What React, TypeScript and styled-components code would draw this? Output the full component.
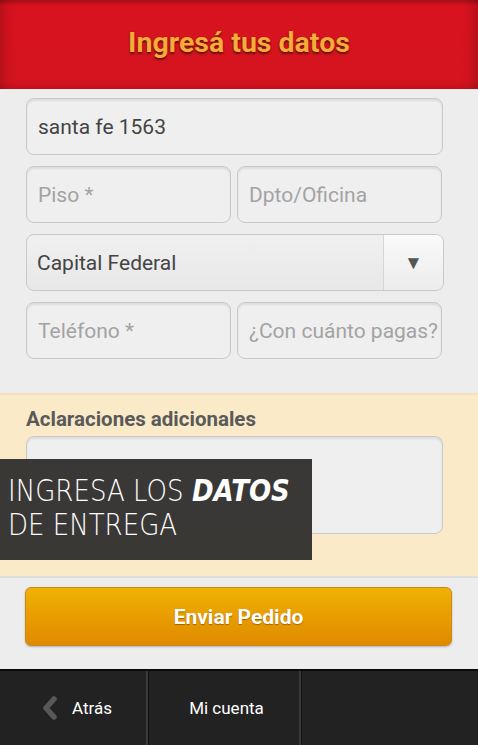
import styled, { createGlobalStyle } from "styled-components"

const GlobalStyle = createGlobalStyle`
  html, body {
    margin: 0;
    padding: 0;
    background: #ededed;
    font-family: Roboto, "Liberation Sans", sans-serif;
  }
  * {
    box-sizing: border-box;
  }
`

const Page = styled.div`
  width: 478px;
  height: 745px;
  display: flex;
  flex-direction: column;
  background: #ededed;
  position: relative;
  overflow: hidden;
`

const Header = styled.header`
  height: 89px;
  display: flex;
  align-items: center;
  justify-content: center;
  background: linear-gradient(#a8101a 0px, #d8131f 6px, #d51420 80px, #c8121c 89px);
  box-shadow: inset 12px 0 14px -10px rgba(0, 0, 0, 0.25),
    inset -12px 0 14px -10px rgba(0, 0, 0, 0.25);
`

const Title = styled.h1`
  margin: 0;
  padding-bottom: 4px;
  font-size: 28.5px;
  font-weight: 700;
  color: #f8aa3a;
  text-shadow: 0 2px 2px #6a1208, 0 0 1px #6a1208;
`

const Form = styled.div`
  padding: 9px 35px 34px 26px;
  display: flex;
  flex-direction: column;
  gap: 11px;
`

const Row = styled.div`
  display: grid;
  grid-template-columns: 205px 205px;
  gap: 6px;
`

const Field = styled.div<{ $filled?: boolean }>`
  height: 57px;
  display: flex;
  align-items: center;
  padding-left: 11px;
  border: 1px solid #c9c9c9;
  border-radius: 8px;
  background: #efefef;
  box-shadow: inset 0 2px 2px rgba(0, 0, 0, 0.08);
  font-size: 21px;
  color: ${(p) => (p.$filled ? "#444" : "#a3a3a3")};
  white-space: nowrap;
  overflow: hidden;
`

const Select = styled.div`
  height: 57px;
  margin-right: -1px;
  display: flex;
  border: 1px solid #c9c9c9;
  border-radius: 8px;
  background: linear-gradient(#f0f0f0, #e8e8e8);
  overflow: hidden;
`

const SelectValue = styled.div`
  flex: 1;
  display: flex;
  align-items: center;
  padding-left: 10px;
  font-size: 21px;
  color: #444;
`

const SelectArrow = styled.div`
  width: 60px;
  display: flex;
  align-items: center;
  justify-content: center;
  border-left: 1px solid #d6d6d6;
  background: linear-gradient(#fafafa, #ececec);
  font-size: 19px;
  color: #555;
`

const Notes = styled.section`
  height: 185px;
  background: #fbeac7;
  border-top: 2px solid #f5e2bd;
  border-bottom: 2px solid #dedede;
  padding: 12px 35px 0 26px;
`

const Label = styled.div`
  font-size: 20.5px;
  font-weight: 700;
  color: #5a5a5a;
  margin-bottom: 5px;
`

const TextArea = styled.div`
  height: 98px;
  border: 1px solid #c9c9c9;
  border-radius: 8px;
  background: #efefef;
  box-shadow: inset 0 2px 2px rgba(0, 0, 0, 0.08);
`

const ButtonArea = styled.div`
  height: 91px;
  padding: 9px 26px 0 25px;
`

const SendButton = styled.button`
  width: 100%;
  height: 59px;
  border: 1px solid #c98a1a;
  border-radius: 6px;
  background: linear-gradient(#f0b204, #e89d00 50%, #df8a00);
  color: #fff;
  font-family: Roboto, "Liberation Sans", sans-serif;
  font-size: 21px;
  font-weight: 700;
  text-shadow: 0 1px 1px rgba(120, 60, 0, 0.6);
  box-shadow: 0 1px 2px rgba(0, 0, 0, 0.25);
`

const Footer = styled.nav`
  flex: 1;
  display: flex;
  background: #222;
  border-top: 2px solid #0c0c0c;
`

const Tab = styled.div<{ $width: number; $shift?: number }>`
  width: ${(p) => p.$width}px;
  display: flex;
  align-items: center;
  justify-content: center;
  gap: 14px;
  padding: 0 0 1px ${(p) => p.$shift ?? 0}px;
  color: #fff;
  font-size: 17px;
  border-right: 2px solid #3a3a3a;
  box-shadow: 1px 0 0 #0e0e0e;
`

const Overlay = styled.div`
  position: absolute;
  left: 0;
  top: 459px;
  width: 312px;
  height: 101px;
  background: rgba(52, 50, 48, 0.97);
  padding: 14px 0 0 8px;
`

const OverlayLine = styled.div`
  color: #fff;
  font-family: "DejaVu Sans", sans-serif;
  font-weight: 200;
  font-size: 31px;
  line-height: 34px;
  height: 34px;
  white-space: nowrap;
  transform: scaleX(0.84);
  transform-origin: left center;
`

const Strong = styled.span`
  font-weight: 700;
  font-style: italic;
`

function BackIcon() {
  return (
    <svg width="16" height="24" viewBox="0 0 16 24">
      <path d="M12 3 L4 12 L12 21" fill="none" stroke="#585858" strokeWidth="5.5" strokeLinejoin="round" strokeLinecap="round" />
    </svg>
  )
}

export default function App() {
  return (
    <Page>
      <GlobalStyle />
      <Header>
        <Title>Ingresá tus datos</Title>
      </Header>
      <Form>
        <Field $filled>santa fe 1563</Field>
        <Row>
          <Field>Piso *</Field>
          <Field>Dpto/Oficina</Field>
        </Row>
        <Select>
          <SelectValue>Capital Federal</SelectValue>
          <SelectArrow>▼</SelectArrow>
        </Select>
        <Row>
          <Field>Teléfono *</Field>
          <Field>¿Con cuánto pagas?</Field>
        </Row>
      </Form>
      <Notes>
        <Label>Aclaraciones adicionales</Label>
        <TextArea />
      </Notes>
      <ButtonArea>
        <SendButton>Enviar Pedido</SendButton>
      </ButtonArea>
      <Footer>
        <Tab $width={148} $shift={8}>
          <BackIcon />
          Atrás
        </Tab>
        <Tab $width={153} $shift={6}>Mi cuenta</Tab>
      </Footer>
      <Overlay>
        <OverlayLine>
          INGRESA LOS <Strong>DATOS</Strong>
        </OverlayLine>
        <OverlayLine>DE ENTREGA</OverlayLine>
      </Overlay>
    </Page>
  )
}
